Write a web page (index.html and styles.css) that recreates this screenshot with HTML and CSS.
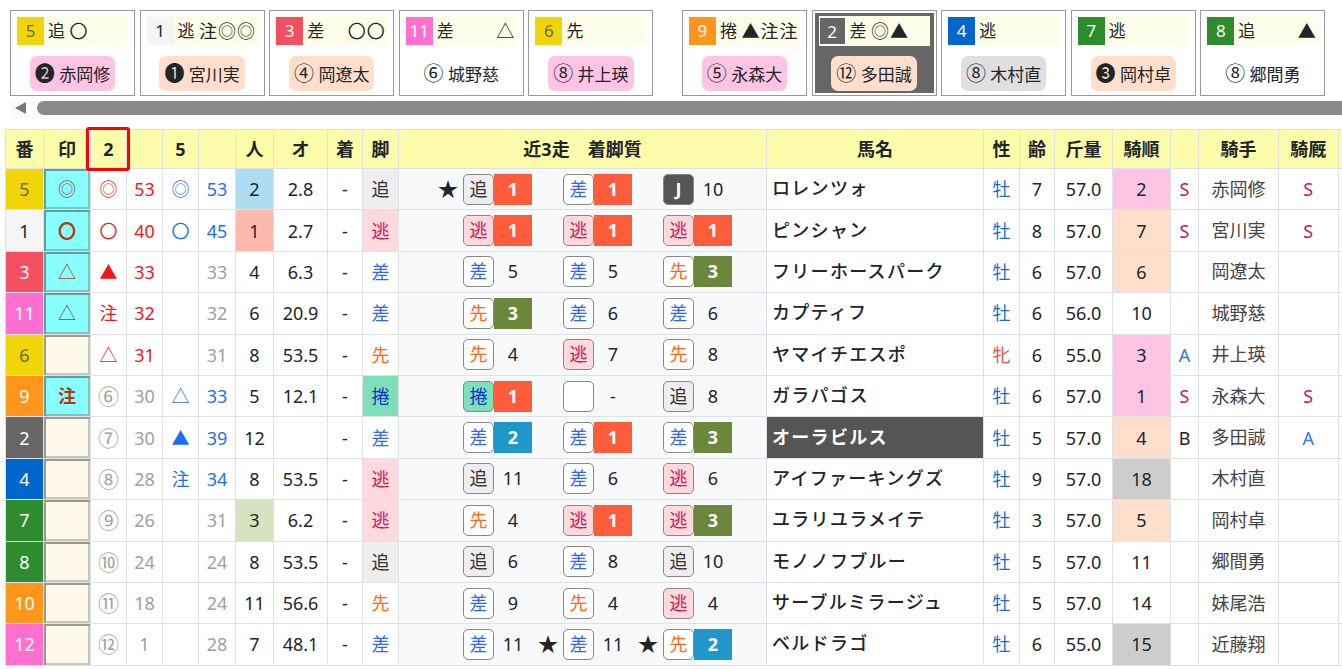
FILE: index.html
```html
<!DOCTYPE html>
<html lang="ja">
<head>
    <meta charset="UTF-8">
    <title>出馬表</title>
    <link rel="stylesheet" href="styles.css">
</head>
<body>
    <div class="cards">
        <div class="card"><div class="card-top"><span class="waku w-yellow">5</span><span class="lbl">追</span><span class="m">〇</span><span class="m"></span><span class="m"></span></div><div class="card-jockey"><span class="pill pink"><span class="c">❷</span> 赤岡修</span></div></div>
        <div class="card"><div class="card-top"><span class="waku w-white">1</span><span class="lbl">逃</span><span class="m">注</span><span class="m">◎</span><span class="m">◎</span></div><div class="card-jockey"><span class="pill peach"><span class="c">❶</span> 宮川実</span></div></div>
        <div class="card"><div class="card-top"><span class="waku w-red">3</span><span class="lbl">差</span><span class="m"></span><span class="m">〇</span><span class="m">〇</span></div><div class="card-jockey"><span class="pill peach"><span class="c">④</span> 岡遼太</span></div></div>
        <div class="card"><div class="card-top"><span class="waku w-pink">11</span><span class="lbl">差</span><span class="m"></span><span class="m"></span><span class="m">△</span></div><div class="card-jockey"><span class="pill"><span class="c">⑥</span> 城野慈</span></div></div>
        <div class="card"><div class="card-top"><span class="waku w-yellow">6</span><span class="lbl">先</span><span class="m"></span><span class="m"></span><span class="m"></span></div><div class="card-jockey"><span class="pill pink"><span class="c">⑧</span> 井上瑛</span></div></div>
        <div class="card card-gap"><div class="card-top"><span class="waku w-orange">9</span><span class="lbl">捲</span><span class="m">▲</span><span class="m">注</span><span class="m">注</span></div><div class="card-jockey"><span class="pill pink"><span class="c">⑤</span> 永森大</span></div></div>
        <div class="card selected"><div class="card-top"><span class="waku w-dark">2</span><span class="lbl">差</span><span class="m">◎</span><span class="m">▲</span><span class="m"></span></div><div class="card-jockey"><span class="pill peach"><span class="c">⑫</span> 多田誠</span></div></div>
        <div class="card"><div class="card-top"><span class="waku w-blue">4</span><span class="lbl">逃</span><span class="m"></span><span class="m"></span><span class="m"></span></div><div class="card-jockey"><span class="pill gray"><span class="c">⑧</span> 木村直</span></div></div>
        <div class="card"><div class="card-top"><span class="waku w-green">7</span><span class="lbl">逃</span><span class="m"></span><span class="m"></span><span class="m"></span></div><div class="card-jockey"><span class="pill peach"><span class="c">❸</span> 岡村卓</span></div></div>
        <div class="card"><div class="card-top"><span class="waku w-green">8</span><span class="lbl">追</span><span class="m"></span><span class="m"></span><span class="m">▲</span></div><div class="card-jockey"><span class="pill"><span class="c">⑧</span> 郷間勇</span></div></div>
    </div>

    <div class="scrollbar"><span class="scroll-arrow"></span><span class="scroll-thumb"></span></div>

    <table class="race">
        <colgroup>
            <col class="c38"><col class="c47"><col class="c36"><col class="c36"><col class="c36"><col class="c37"><col class="c38"><col class="c54"><col class="c35"><col class="c36"><col class="c368"><col class="c217"><col class="c36"><col class="c35"><col class="c58"><col class="c58"><col class="c28"><col class="c80"><col class="c59"><col class="c60">
        </colgroup>
        <thead>
            <tr>
                <th>番</th><th>印</th><th class="sorted">2<span class="sort-box"></span></th><th></th><th>5</th><th></th><th>人</th><th>オ</th><th>着</th><th>脚</th><th>近3走　着脚質</th><th>馬名</th><th>性</th><th>齢</th><th>斤量</th><th>騎順</th><th></th><th>騎手</th><th>騎厩</th><th></th>
            </tr>
        </thead>
        <tbody>
            <tr>
                <td class="w-yellow">5</td><td class="mark on">◎</td><td class="r">◎</td><td class="r">53</td><td class="b">◎</td><td class="b">53</td><td class="pop1">2</td><td>2.8</td><td>-</td><td class="st-oi">追</td>
                <td class="recent"><div class="runs">
                    <div class="run"><i>★</i><span class="sb st-oi">追</span><span class="no n1">1</span></div>
                    <div class="run"><i></i><span class="sb st-sa">差</span><span class="no n1">1</span></div>
                    <div class="run"><i></i><span class="sb st-j">J</span><span class="no">10</span></div>
                </div></td>
                <td class="name">ロレンツォ</td><td class="sex-m">牡</td><td>7</td><td>57.0</td><td class="pink">2</td><td class="s">S</td><td class="jockey">赤岡修</td><td class="s">S</td><td></td>
            </tr>
            <tr>
                <td class="w-white">1</td><td class="mark on strong">〇</td><td class="r">〇</td><td class="r">40</td><td class="b">〇</td><td class="b">45</td><td class="pop2">1</td><td>2.7</td><td>-</td><td class="st-ni">逃</td>
                <td class="recent"><div class="runs">
                    <div class="run"><i></i><span class="sb st-ni">逃</span><span class="no n1">1</span></div>
                    <div class="run"><i></i><span class="sb st-ni">逃</span><span class="no n1">1</span></div>
                    <div class="run"><i></i><span class="sb st-ni">逃</span><span class="no n1">1</span></div>
                </div></td>
                <td class="name">ピンシャン</td><td class="sex-m">牡</td><td>8</td><td>57.0</td><td class="peach">7</td><td class="s">S</td><td class="jockey">宮川実</td><td class="s">S</td><td></td>
            </tr>
            <tr>
                <td class="w-red">3</td><td class="mark on">△</td><td class="r">▲</td><td class="r">33</td><td></td><td class="g">33</td><td>4</td><td>6.3</td><td>-</td><td class="st-sa">差</td>
                <td class="recent"><div class="runs">
                    <div class="run"><i></i><span class="sb st-sa">差</span><span class="no">5</span></div>
                    <div class="run"><i></i><span class="sb st-sa">差</span><span class="no">5</span></div>
                    <div class="run"><i></i><span class="sb st-se">先</span><span class="no n3">3</span></div>
                </div></td>
                <td class="name">フリーホースパーク</td><td class="sex-m">牡</td><td>6</td><td>57.0</td><td class="peach">6</td><td></td><td class="jockey">岡遼太</td><td></td><td></td>
            </tr>
            <tr>
                <td class="w-pink">11</td><td class="mark on">△</td><td class="r">注</td><td class="r">32</td><td></td><td class="g">32</td><td>6</td><td>20.9</td><td>-</td><td class="st-sa">差</td>
                <td class="recent"><div class="runs">
                    <div class="run"><i></i><span class="sb st-se">先</span><span class="no n3">3</span></div>
                    <div class="run"><i></i><span class="sb st-sa">差</span><span class="no">6</span></div>
                    <div class="run"><i></i><span class="sb st-sa">差</span><span class="no">6</span></div>
                </div></td>
                <td class="name">カプティフ</td><td class="sex-m">牡</td><td>6</td><td>56.0</td><td>10</td><td></td><td class="jockey">城野慈</td><td></td><td></td>
            </tr>
            <tr>
                <td class="w-yellow">6</td><td class="mark"></td><td class="r">△</td><td class="r">31</td><td></td><td class="g">31</td><td>8</td><td>53.5</td><td>-</td><td class="st-se">先</td>
                <td class="recent"><div class="runs">
                    <div class="run"><i></i><span class="sb st-se">先</span><span class="no">4</span></div>
                    <div class="run"><i></i><span class="sb st-ni">逃</span><span class="no">7</span></div>
                    <div class="run"><i></i><span class="sb st-se">先</span><span class="no">8</span></div>
                </div></td>
                <td class="name">ヤマイチエスポ</td><td class="sex-f">牝</td><td>6</td><td>55.0</td><td class="pink">3</td><td class="a">A</td><td class="jockey">井上瑛</td><td></td><td></td>
            </tr>
            <tr>
                <td class="w-orange">9</td><td class="mark on strong">注</td><td class="g c">⑥</td><td class="g">30</td><td class="b">△</td><td class="b">33</td><td>5</td><td>12.1</td><td>-</td><td class="st-ma">捲</td>
                <td class="recent"><div class="runs">
                    <div class="run"><i></i><span class="sb st-ma">捲</span><span class="no n1">1</span></div>
                    <div class="run"><i></i><span class="sb"></span><span class="no">-</span></div>
                    <div class="run"><i></i><span class="sb st-oi">追</span><span class="no">8</span></div>
                </div></td>
                <td class="name">ガラパゴス</td><td class="sex-m">牡</td><td>6</td><td>57.0</td><td class="pink">1</td><td class="s">S</td><td class="jockey">永森大</td><td class="s">S</td><td></td>
            </tr>
            <tr>
                <td class="w-dark">2</td><td class="mark"></td><td class="g c">⑦</td><td class="g">30</td><td class="b">▲</td><td class="b">39</td><td>12</td><td></td><td>-</td><td class="st-sa">差</td>
                <td class="recent"><div class="runs">
                    <div class="run"><i></i><span class="sb st-sa">差</span><span class="no n2">2</span></div>
                    <div class="run"><i></i><span class="sb st-sa">差</span><span class="no n1">1</span></div>
                    <div class="run"><i></i><span class="sb st-sa">差</span><span class="no n3">3</span></div>
                </div></td>
                <td class="name picked">オーラビルス</td><td class="sex-m">牡</td><td>5</td><td>57.0</td><td class="peach">4</td><td>B</td><td class="jockey">多田誠</td><td class="a">A</td><td></td>
            </tr>
            <tr>
                <td class="w-blue">4</td><td class="mark"></td><td class="g c">⑧</td><td class="g">28</td><td class="b">注</td><td class="b">34</td><td>8</td><td>53.5</td><td>-</td><td class="st-ni">逃</td>
                <td class="recent"><div class="runs">
                    <div class="run"><i></i><span class="sb st-oi">追</span><span class="no">11</span></div>
                    <div class="run"><i></i><span class="sb st-sa">差</span><span class="no">6</span></div>
                    <div class="run"><i></i><span class="sb st-ni">逃</span><span class="no">6</span></div>
                </div></td>
                <td class="name">アイファーキングズ</td><td class="sex-m">牡</td><td>9</td><td>57.0</td><td class="low">18</td><td></td><td class="jockey">木村直</td><td></td><td></td>
            </tr>
            <tr>
                <td class="w-green">7</td><td class="mark"></td><td class="g c">⑨</td><td class="g">26</td><td></td><td class="g">31</td><td class="pop3">3</td><td>6.2</td><td>-</td><td class="st-ni">逃</td>
                <td class="recent"><div class="runs">
                    <div class="run"><i></i><span class="sb st-se">先</span><span class="no">4</span></div>
                    <div class="run"><i></i><span class="sb st-ni">逃</span><span class="no n1">1</span></div>
                    <div class="run"><i></i><span class="sb st-ni">逃</span><span class="no n3">3</span></div>
                </div></td>
                <td class="name">ユラリユラメイテ</td><td class="sex-m">牡</td><td>3</td><td>57.0</td><td class="peach">5</td><td></td><td class="jockey">岡村卓</td><td></td><td></td>
            </tr>
            <tr>
                <td class="w-green">8</td><td class="mark"></td><td class="g c">⑩</td><td class="g">24</td><td></td><td class="g">24</td><td>8</td><td>53.5</td><td>-</td><td class="st-oi">追</td>
                <td class="recent"><div class="runs">
                    <div class="run"><i></i><span class="sb st-oi">追</span><span class="no">6</span></div>
                    <div class="run"><i></i><span class="sb st-sa">差</span><span class="no">8</span></div>
                    <div class="run"><i></i><span class="sb st-oi">追</span><span class="no">10</span></div>
                </div></td>
                <td class="name">モノノフブルー</td><td class="sex-m">牡</td><td>5</td><td>57.0</td><td>11</td><td></td><td class="jockey">郷間勇</td><td></td><td></td>
            </tr>
            <tr>
                <td class="w-orange">10</td><td class="mark"></td><td class="g c">⑪</td><td class="g">18</td><td></td><td class="g">24</td><td>11</td><td>56.6</td><td>-</td><td class="st-se">先</td>
                <td class="recent"><div class="runs">
                    <div class="run"><i></i><span class="sb st-sa">差</span><span class="no">9</span></div>
                    <div class="run"><i></i><span class="sb st-se">先</span><span class="no">4</span></div>
                    <div class="run"><i></i><span class="sb st-ni">逃</span><span class="no">4</span></div>
                </div></td>
                <td class="name">サーブルミラージュ</td><td class="sex-m">牡</td><td>5</td><td>57.0</td><td>14</td><td></td><td class="jockey">妹尾浩</td><td></td><td></td>
            </tr>
            <tr>
                <td class="w-pink">12</td><td class="mark"></td><td class="g c">⑫</td><td class="g">1</td><td></td><td class="g">28</td><td>7</td><td>48.1</td><td>-</td><td class="st-sa">差</td>
                <td class="recent"><div class="runs">
                    <div class="run"><i></i><span class="sb st-sa">差</span><span class="no">11</span></div>
                    <div class="run"><i>★</i><span class="sb st-sa">差</span><span class="no">11</span></div>
                    <div class="run"><i>★</i><span class="sb st-se">先</span><span class="no n2">2</span></div>
                </div></td>
                <td class="name">ベルドラゴ</td><td class="sex-m">牡</td><td>6</td><td>55.0</td><td class="low">15</td><td></td><td class="jockey">近藤翔</td><td></td><td></td>
            </tr>
        </tbody>
    </table>
</body>
</html>
```
FILE: styles.css
```css
* {
    box-sizing: border-box;
}
html, body {
    margin: 0;
    padding: 0;
    overflow: hidden;
}
body {
    width: 1342px;
    height: 669px;
    font-family: "Noto Sans", "Noto Sans CJK JP", sans-serif;
    font-size: 18px;
    color: #212529;
    background: #fff;
}

/* top cards */
.cards {
    display: flex;
    gap: 4.6px;
    padding: 10px 0 0 10px;
}
.card {
    flex: none;
    width: 125px;
    height: 86px;
    border: 1px solid #999;
    padding: 5px 6px 4px;
    background: #fff;
}
.card-gap {
    margin-left: 24px;
}
.card-top {
    display: flex;
    align-items: center;
    height: 30px;
    background: #fdfee8;
    font-size: 17px;
    line-height: 30px;
}
.waku {
    flex: none;
    width: 27px;
    height: 28px;
    line-height: 28px;
    text-align: center;
}
.lbl {
    flex: none;
    padding-left: 4px;
    width: 25px;
}
.m {
    flex: none;
    width: 19px;
    text-align: center;
    font-size: 18px;
}
.card-jockey {
    text-align: center;
    margin-top: 10px;
}
.pill {
    display: inline-block;
    height: 35px;
    line-height: 37px;
    padding: 0 5px;
    border-radius: 7px;
    font-size: 17px;
    white-space: nowrap;
}
.pill .c {
    font-size: 20px;
    line-height: 20px;
}
.pink { background: #ffc4e4; }
.peach { background: #ffdfcc; }
.gray { background: #dfdfdf; }
.selected {
    background: #666;
    border: 1px solid #999;
    box-shadow: inset 0 0 0 2px #fff;
}
.selected .waku {
    border: 1px solid #fff;
}

/* scrollbar */
.scrollbar {
    display: flex;
    align-items: flex-start;
    height: 18px;
    margin: 5px 0 0 10px;
    background: #fafafa;
}
.scroll-arrow {
    flex: none;
    width: 0;
    height: 0;
    margin: 1px 11px 0 5px;
    border-style: solid;
    border-width: 6.5px 11px 6.5px 0;
    border-color: transparent #777 transparent transparent;
}
.scroll-thumb {
    flex: 1;
    height: 14px;
    border-radius: 7px 0 0 7px;
    background: #8a8a8a;
}

/* race table */
.race {
    table-layout: fixed;
    border-collapse: collapse;
    width: 1392px;
    margin: 10px 0 0 5px;
}
.c38 { width: 38px; }
.c47 { width: 47px; }
.c36 { width: 36px; }
.c37 { width: 37px; }
.c54 { width: 54px; }
.c35 { width: 35px; }
.c368 { width: 368px; }
.c217 { width: 217px; }
.c58 { width: 58px; }
.c28 { width: 28px; }
.c80 { width: 80px; }
.c59 { width: 59.5px; }
.c60 { width: 60px; }
.race th, .race td {
    border: 1px solid #dee2e6;
    padding: 0;
    text-align: center;
    line-height: 24px;
    white-space: nowrap;
}
.race th {
    height: 39px;
    background: #fcfcaa;
    font-weight: 700;
}
.race td {
    height: 41.4px;
}
.sorted {
    position: relative;
}
.sort-box {
    position: absolute;
    z-index: 2;
    left: -5px;
    top: -3px;
    width: 44px;
    height: 44px;
    border: 3px solid #f00;
    border-radius: 3px;
}

/* colours for frame numbers */
.w-yellow { background: #f2d40a; color: #6b6b3a; }
.w-white { background: #f5f5f5; color: #212529; }
.w-red { background: #f34f60; color: #fff; }
.w-pink { background: #ff6fcf; color: #fff; }
.w-orange { background: #ff961c; color: #fff; }
.w-dark { background: #666; color: #fff; }
.w-blue { background: #0066cc; color: #fff; }
.w-green { background: #2e8b2e; color: #fff; }

.mark {
    background: #fff9ec;
    box-shadow: inset 1px 1px 0 1px #9c9a90, inset -1px -1px 0 1px #c9c6ba;
    color: #9a4a20;
}
.mark.on {
    background: #88ffff;
    box-shadow: inset 1px 1px 0 1px #5f9f9f, inset -1px -1px 0 1px #7fc4c4;
}
.mark.strong {
    font-weight: 700;
    color: #b33a10;
}
.r { color: #f01818; }
.b { color: #1a6ff0; }
.g { color: #a0a0a0; }
.race td.c { font-size: 21px; }
.pop1 { background: #aedcf0; }
.pop2 { background: #ffb8ac; }
.pop3 { background: #d6e2c0; }
.low { background: #cdcdcd; }

/* running style */
.st-oi { background: #eeeeee; color: #333; }
.st-ni { background: #ffd9dc; color: #c2185b; }
.st-sa { background: #fff; color: #3366ee; }
.st-se { background: #fff; color: #ff6611; }
.st-ma { background: #7fe0b8; color: #1133cc; }
.st-j { background: #555; color: #fff; font-weight: 700; }

.race td.recent {
    background: #f8f9fa;
}
.runs {
    display: flex;
    gap: 6px;
    padding-left: 39px;
}
.run {
    display: flex;
    flex: none;
    width: 94px;
}
.run i {
    flex: none;
    width: 25px;
    padding-right: 6px;
    font-style: normal;
    font-size: 20px;
    line-height: 31px;
    text-align: right;
}
.sb {
    flex: none;
    width: 31px;
    height: 31px;
    line-height: 29px;
    border: 1px solid #888;
    border-radius: 5px;
    background-color: #fff;
}
.sb.st-oi { background-color: #eee; }
.sb.st-ni { background-color: #ffd9dc; }
.sb.st-ma { background-color: #7fe0b8; }
.sb.st-j { background-color: #555; }
.no {
    flex: none;
    width: 38px;
    height: 31px;
    line-height: 31px;
    text-align: center;
}
.n1, .n2, .n3 {
    color: #fff;
    font-weight: 700;
}
.n1 { background: #ff5c3c; }
.n2 { background: #1f97c8; }
.n3 { background: #6c873c; }

.race td.name {
    text-align: left;
    padding-left: 5px;
    padding-bottom: 2px;
    font-weight: 500;
    letter-spacing: 1.3px;
}
.race td.picked {
    background: #555;
    color: #fff;
    font-weight: 700;
}
.race td.jockey {
    padding-bottom: 1px;
    color: #444;
}
.sex-m { color: #1a6fc4; }
.sex-f { color: #f0524a; }
.s { color: #c2185b; }
.a { color: #2d7ce0; }
```
